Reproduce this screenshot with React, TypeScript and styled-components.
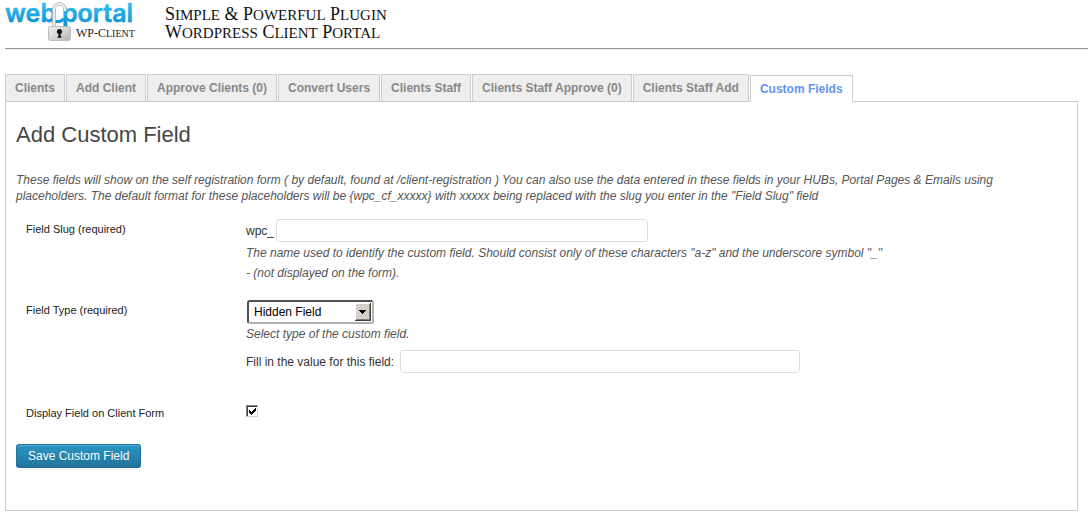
import React, { useState } from "react";
import styled, { createGlobalStyle } from "styled-components";

const GlobalStyle = createGlobalStyle`
  *, *::before, *::after { box-sizing: border-box; }
  body {
    margin: 0;
    background: #fff;
    color: #333;
    font-family: "Liberation Sans", Arial, sans-serif;
    font-size: 12px;
    line-height: 20px;
  }
`;

const Page = styled.div`
  padding: 0 0 15px 5px;
`;

const Header = styled.header`
  display: flex;
  align-items: flex-start;
  height: 49px;
  border-bottom: 1px solid #999;
  box-shadow: 0 1px #eee;
`;

const Logo = styled.svg`
  display: block;
  flex: none;
  margin-right: 30px;
`;

const Tagline = styled.p`
  margin: 5px 0 0;
  color: #111;
  font-family: "Liberation Serif", "Times New Roman", serif;
  font-size: 18px;
  line-height: 18px;
  text-transform: uppercase;
  white-space: nowrap;
`;

const SmallCaps = styled.span`
  font-size: 15px;
  line-height: 1;
`;

const Main = styled.main`
  margin: 25px 10px 0 0;
`;

const Tabs = styled.nav`
  display: flex;
  align-items: flex-end;
  gap: 1px;
  margin-bottom: -1px;
`;

const Tab = styled.a<{ $active?: boolean }>`
  height: ${(p) => (p.$active ? 27 : 28)}px;
  padding: 3px 9px 0;
  border: 1px solid #ccc;
  border-bottom-color: ${(p) => (p.$active ? "#fff" : "#ccc")};
  background: ${(p) => (p.$active ? "#fff" : "#eee")};
  color: ${(p) => (p.$active ? "#6495ed" : "#888")};
  font-weight: bold;
  text-decoration: none;
  white-space: nowrap;
`;

const Panel = styled.section`
  padding: 18px 10px 42px;
  border: 1px solid #ccc;
`;

const Title = styled.h1`
  margin: 0;
  color: #464646;
  font-size: 22px;
  line-height: 30px;
  font-weight: normal;
`;

const Intro = styled.p`
  margin: 22px 0 0;
  max-width: 1020px;
  color: #555;
  font-style: italic;
  line-height: 16px;
`;

const Row = styled.div`
  display: grid;
  grid-template-columns: 220px 1fr;
  padding-left: 10px;
  margin-top: 15px;
`;

const Rows = styled.div`
  ${Row} + ${Row} { margin-top: 17px; }
`;

const RowLabel = styled.label`
  color: #222;
  font-size: 11px;
`;

const Line = styled.div`
  display: flex;
  align-items: flex-start;
  height: 24px;
  line-height: 24px;
`;

const ValueLine = styled(Line)`
  gap: 4px;
  margin: 6px 0 12px;
`;

const TextInput = styled.input<{ $width: number }>`
  width: ${(p) => p.$width}px;
  height: 23px;
  margin: 0 0 0 2px;
  padding: 3px;
  border: 1px solid #dfdfdf;
  border-radius: 3px;
  background: #fff;
  color: #333;
  font: inherit;
  line-height: 16px;
`;

const Hint = styled.p`
  margin: 0;
  color: #555;
  font-style: italic;
`;

const SelectWrap = styled.div`
  position: relative;
  width: 127px;
  height: 24px;
  margin-left: 1px;
`;

const Select = styled.select`
  appearance: none;
  width: 100%;
  height: 100%;
  padding: 0 24px 0 5px;
  border: 2px solid;
  border-color: #505050 #b5b1aa #b5b1aa #505050;
  border-radius: 3px;
  background: #fff;
  color: #000;
  font: inherit;
`;

const SelectArrow = styled.svg`
  position: absolute;
  top: 3px;
  right: 3px;
  pointer-events: none;
`;

const CheckWrap = styled.span`
  position: relative;
  display: block;
  width: 12px;
  height: 12px;
  margin-top: 2px;
`;

const CheckMark = styled.svg`
  position: absolute;
  inset: 0;
  visibility: hidden;
  pointer-events: none;
`;

const CheckBox = styled.input`
  appearance: none;
  display: block;
  width: 12px;
  height: 12px;
  margin: 0;
  border: 1px solid;
  border-color: #808080 #d4d0c8 #d4d0c8 #808080;
  background: #fff;
  box-shadow: inset 1px 1px #404040;
  &:checked + ${CheckMark} { visibility: visible; }
`;

const SaveButton = styled.button`
  display: block;
  height: 24px;
  margin-top: 21px;
  padding: 0 11px;
  border: 1px solid #21759b;
  border-bottom-color: #1e6a8d;
  border-radius: 3px;
  background: linear-gradient(#2a95c5, #21759b);
  box-shadow: inset 0 1px rgba(120, 200, 230, 0.5);
  color: #fff;
  font: inherit;
  line-height: 22px;
  text-shadow: 0 1px rgba(0, 0, 0, 0.1);
`;

const tabs = [
  "Clients",
  "Add Client",
  "Approve Clients (0)",
  "Convert Users",
  "Clients Staff",
  "Clients Staff Approve (0)",
  "Clients Staff Add",
  "Custom Fields",
];

const introText =
  "These fields will show on the self registration form ( by default, found at /client-registration ) You can also use the data entered in these fields in your HUBs, Portal Pages & Emails using placeholders. The default format for these placeholders will be {wpc_cf_xxxxx} with xxxxx being replaced with the slug you enter in the \"Field Slug\" field";

function PortalLogo() {
  return (
    <Logo width="130" height="44" viewBox="5 0 130 44" role="img" aria-label="web portal WP-Client">
      <defs>
        <linearGradient id="word" gradientUnits="userSpaceOnUse" x1="0" y1="4" x2="0" y2="27">
          <stop offset="0" stopColor="#35bdf0" />
          <stop offset="1" stopColor="#078bd0" />
        </linearGradient>
        <linearGradient id="body" x1="0" y1="0" x2="1" y2="1">
          <stop offset="0" stopColor="#f0f0f0" />
          <stop offset="0.5" stopColor="#d6d6d6" />
          <stop offset="1" stopColor="#b0b0b0" />
        </linearGradient>
      </defs>
      <g
        fill="url(#word)"
        stroke="url(#word)"
        strokeWidth="0.500"
        strokeLinejoin="round"
        fontFamily="Inter, Liberation Sans, sans-serif"
        fontWeight="600"
        fontSize="25"
      >
        <text x="5" y="22">web</text>
        <text x="62" y="22">portal</text>
      </g>
      <path d="M54 21.500h5q3 0 4.500-3" fill="none" stroke="#1299da" strokeWidth="3" />
      <path d="M54 26V9.500a5.500 5.500 0 0 1 11 0v1.500" fill="none" stroke="#b4b4b4" strokeWidth="3.600" />
      <path d="M54 26V9.500a5.500 5.500 0 0 1 11 0v1.500" fill="none" stroke="#ebebeb" strokeWidth="2.200" />
      <rect x="48.500" y="26.500" width="22" height="14" rx="2" fill="url(#body)" stroke="#bcbcbc" />
      <circle cx="59.500" cy="31.500" r="2.600" fill="#151515" />
      <path d="M58.500 32h2v3l1.200 2.800h-4.200l1-2.800z" fill="#151515" />
      <text x="76" y="37" fill="#222" fontFamily="Liberation Serif, Times New Roman, serif" fontSize="12">
        WP-C<tspan fontSize="10">LIENT</tspan>
      </text>
    </Logo>
  );
}

function CapsWords({ text }: { text: string }) {
  return (
    <>
      {text.split(" ").map((word, i) => (
        <React.Fragment key={word}>
          {i > 0 && " "}
          {word[0]}
          <SmallCaps>{word.slice(1)}</SmallCaps>
        </React.Fragment>
      ))}
    </>
  );
}

export default function App() {
  const [shown, setShown] = useState(true);
  return (
    <Page>
      <GlobalStyle />
      <Header>
        <PortalLogo />
        <Tagline>
          <CapsWords text="Simple & Powerful Plugin" />
          <br />
          <CapsWords text="Wordpress Client Portal" />
        </Tagline>
      </Header>
      <Main>
        <Tabs>
          {tabs.map((name) => (
            <Tab key={name} href="#" $active={name === "Custom Fields"}>
              {name}
            </Tab>
          ))}
        </Tabs>
        <Panel>
          <Title>Add Custom Field</Title>
          <Intro>{introText}</Intro>
          <form onSubmit={(e) => e.preventDefault()}>
            <Rows>
              <Row>
                <RowLabel htmlFor="slug">Field Slug (required)</RowLabel>
                <div>
                  <Line>
                    <span>wpc_</span>
                    <TextInput id="slug" type="text" $width={372} />
                  </Line>
                  <Hint>
                    The name used to identify the custom field. Should consist only of these characters "a-z" and the
                    underscore symbol "_"
                    <br />- (not displayed on the form).
                  </Hint>
                </div>
              </Row>
              <Row>
                <RowLabel htmlFor="type">Field Type (required)</RowLabel>
                <div>
                  <SelectWrap>
                    <Select id="type" defaultValue="hidden">
                      <option value="hidden">Hidden Field</option>
                      <option value="text">Text Box</option>
                    </Select>
                    <SelectArrow width="16" height="18" viewBox="0 0 16 18" shapeRendering="crispEdges">
                      <path d="M0 0h16v18H0z" fill="#404040" />
                      <path d="M0 0h15v17H0z" fill="#fff" />
                      <path d="M1 1h14v16H1z" fill="#808080" />
                      <path d="M1 1h13v15H1z" fill="#d4d0c8" />
                      <path d="M4 7h7v1h-1v1H9v1H8v1H7v-1H6v-1H5V8H4z" fill="#000" />
                    </SelectArrow>
                  </SelectWrap>
                  <Hint>Select type of the custom field.</Hint>
                  <ValueLine>
                    <label htmlFor="value">Fill in the value for this field:</label>
                    <TextInput id="value" type="text" $width={400} />
                  </ValueLine>
                </div>
              </Row>
              <Row>
                <RowLabel htmlFor="display">Display Field on Client Form</RowLabel>
                <CheckWrap>
                  <CheckBox id="display" type="checkbox" checked={shown} onChange={(e) => setShown(e.target.checked)} />
                  <CheckMark width="12" height="12" viewBox="0 0 12 12" shapeRendering="crispEdges">
                    <path d="M3 5h1v1h1v1h1V6h1V5h1V4h1V3h1v3H9v1H8v1H7v1H6v1H5V9H4V8H3z" fill="#000" />
                  </CheckMark>
                </CheckWrap>
              </Row>
            </Rows>
            <SaveButton type="submit">Save Custom Field</SaveButton>
          </form>
        </Panel>
      </Main>
    </Page>
  );
}
